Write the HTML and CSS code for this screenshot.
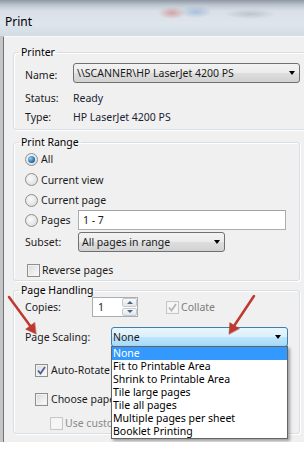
FILE: index.html
```html
<!DOCTYPE html>
<html lang="en">
<head>
    <meta charset="UTF-8">
    <meta name="viewport" content="width=device-width, initial-scale=1.0">
    <title>Print</title>
    <link rel="stylesheet" href="styles.css">
</head>
<body>

    <div class="titlebar"><span class="title">Print</span></div>

    <div class="frame">
        <div class="dialog">

            <fieldset class="group group-printer">
                <legend>Printer</legend>
                <div class="row row-name">
                    <span class="label label-name">Name:</span>
                    <div class="combo combo-printer"><span>\\SCANNER\HP LaserJet 4200 PS</span><i class="caret"></i></div>
                </div>
                <div class="row row-info first"><span class="label label-name">Status:</span><span class="value">Ready</span></div>
                <div class="row row-info"><span class="label label-name">Type:</span><span class="value">HP LaserJet 4200 PS</span></div>
            </fieldset>

            <fieldset class="group group-range">
                <legend>Print Range</legend>
                <div class="row option"><span class="radio on"></span>All</div>
                <div class="row option tall"><span class="radio"></span>Current view</div>
                <div class="row option"><span class="radio"></span>Current page</div>
                <div class="row row-pages">
                    <span class="label label-pages"><span class="radio"></span>Pages</span>
                    <div class="field pages-field">1 - 7</div>
                </div>
                <div class="row row-subset">
                    <span class="label label-subset">Subset:</span>
                    <div class="combo combo-subset"><span>All pages in range</span><i class="caret"></i></div>
                </div>
                <div class="row row-reverse"><span class="check"></span>Reverse pages</div>
            </fieldset>

            <fieldset class="group group-handling">
                <legend>Page Handling</legend>
                <div class="row row-copies">
                    <span class="label label-copies">Copies:</span>
                    <div class="spin">
                        <span class="spin-value">1</span>
                        <div class="spin-buttons">
                            <span class="spin-btn up"></span>
                            <span class="spin-btn down"></span>
                        </div>
                    </div>
                    <div class="collate">
                        <span class="check disabled">
                            <svg width="11" height="11" viewBox="0 0 11 11"><path d="M2 5.5 L4.5 8.5 L9 2" fill="none" stroke="#b4b4b4" stroke-width="1.8"/></svg>
                        </span>Collate
                    </div>
                </div>
                <div class="row row-scaling">
                    <span class="label label-scaling">Page Scaling:</span>
                    <div class="combo combo-scaling">
                        <span>None</span><i class="caret"></i>
                        <ul class="dropdown">
                            <li class="selected">None</li>
                            <li>Fit to Printable Area</li>
                            <li>Shrink to Printable Area</li>
                            <li>Tile large pages</li>
                            <li>Tile all pages</li>
                            <li>Multiple pages per sheet</li>
                            <li>Booklet Printing</li>
                        </ul>
                    </div>
                </div>
                <!-- the open list hides the rest of these labels -->
                <div class="row sub-option rotate" title="Auto-Rotate and Center">
                    <span class="check">
                        <svg width="11" height="11" viewBox="0 0 11 11"><path d="M2 5.5 L4.5 8.5 L9 2" fill="none" stroke="#4a5f9c" stroke-width="1.8"/></svg>
                    </span>Auto-Rotate
                </div>
                <div class="row sub-option paper" title="Choose paper source by PDF page size"><span class="check"></span>Choose pape</div>
                <div class="row sub-option custom" title="Use custom paper size when needed"><span class="check disabled"></span>Use custo</div>
            </fieldset>

        </div>
    </div>

    <!-- red arrows drawn over the screenshot -->
    <svg class="annotations" width="304" height="449" viewBox="0 0 304 449">
        <g fill="#bd3a31" stroke="#bd3a31" stroke-linecap="round">
            <line x1="9" y1="297" x2="31" y2="327" stroke-width="2.5"/>
            <polygon points="36,334 25.6,329.2 34.6,322.6" stroke-width="0.5"/>
            <line x1="254" y1="296" x2="234" y2="326" stroke-width="2.5"/>
            <polygon points="229,334 229.8,322.6 239.2,328.6" stroke-width="0.5"/>
        </g>
    </svg>

</body>
</html>
```

FILE: styles.css
```css
body {
    margin: 0;
    width: 304px;
    height: 449px;
    overflow: hidden;
    position: relative;
    background: #fff;
    font-family: "Noto Sans", sans-serif;
    font-size: 10.5px;
    color: #1b1b1b;
}
.titlebar {
    height: 36px;
    padding: 0 5px;
    box-sizing: border-box;
    display: flex;
    align-items: center;
    background:
        radial-gradient(ellipse 14px 6px at 172px 13px, rgba(200, 90, 80, 0.45), transparent),
        radial-gradient(ellipse 16px 6px at 196px 12px, rgba(80, 130, 200, 0.35), transparent),
        radial-gradient(ellipse 26px 5px at 250px 14px, rgba(120, 130, 140, 0.3), transparent),
        linear-gradient(#8f98a2 0, #bcc5cf 5px, #d9e0e7 11px, #dee5ec 24px, #d3dbe4 36px);
}
.title {
    font-size: 12px;
    color: #000;
    padding-top: 7px;
}
.frame {
    height: 406px;
    padding-left: 3px;
    background: linear-gradient(to right, #c4c6c8, #9c9fa2);
}
.dialog {
    height: 406px;
    box-sizing: border-box;
    border-left: 1px solid #6e7378;
    border-top: 1px solid #f7f9fb;
    background: #f0f0f0;
    padding-top: 8px;
    overflow: hidden;
}

/* group boxes */
.group {
    margin: 0 4px 0 9px;
    padding: 0 11px;
    border: 1px solid #d5dfe5;
    border-radius: 3px;
    box-shadow: inset 1px 1px 0 #fff, 1px 1px 0 #fff;
    min-width: 0;
}
.group legend {
    margin-left: -6px;
    padding: 0 2px;
    line-height: 14px;
    color: #000;
}
.group-printer {
    margin-right: -30px;
    padding-bottom: 3px;
}
.group-range {
    margin-top: 5px;
    padding-bottom: 0;
}
.group-handling {
    margin-top: 2px;
}

.row {
    display: flex;
    align-items: center;
    white-space: nowrap;
}
.label {
    flex: none;
    display: flex;
    align-items: center;
}
.row-name {
    height: 20px;
    margin-top: 4px;
}
.row-info {
    height: 19px;
}
.row-info.first {
    margin-top: 5px;
}
.label-name {
    width: 48px;
    padding-top: 3px;
}
.row-info .label-name {
    padding-top: 0;
}
.value {
    color: #1a2233;
}

/* combo boxes */
.combo {
    height: 20px;
    box-sizing: border-box;
    border: 1px solid #707070;
    border-radius: 3px;
    background: linear-gradient(#f3f3f3 0, #ebebeb 50%, #dedede 50%, #d2d2d2 100%);
    display: flex;
    align-items: center;
    justify-content: space-between;
    padding: 0 4px 0 3px;
    flex: none;
}
.caret {
    width: 0;
    height: 0;
    border-left: 3.5px solid transparent;
    border-right: 3.5px solid transparent;
    border-top: 4px solid #000;
}
.combo-printer {
    width: 227px;
}
.combo-subset {
    width: 147px;
}
.combo-scaling {
    width: 177px;
    position: relative;
    padding: 0 6px 0 1px;
    border-color: #3c7fb1;
    background: linear-gradient(#eaf6fd 0, #d9f0fc 50%, #bee6fd 50%, #a7d9f5 100%);
}
.dropdown {
    position: absolute;
    top: 18px;
    left: -1px;
    width: 177px;
    box-sizing: border-box;
    margin: 0;
    padding: 0;
    list-style: none;
    background: #fff;
    border: 1px solid #646464;
    box-shadow: 2px 2px 3px rgba(0, 0, 0, 0.35);
    z-index: 2;
}
.dropdown li {
    height: 13px;
    line-height: 13px;
    padding-left: 1px;
    color: #000;
}
.dropdown li.selected {
    background: #3399ff;
    color: #fff;
}

/* radios and checkboxes */
.radio {
    width: 13px;
    height: 13px;
    box-sizing: border-box;
    border-radius: 50%;
    border: 1px solid #8e8f8f;
    background: radial-gradient(circle at 40% 40%, #fbfbfb, #d6d6d6);
    margin-right: 3px;
    flex: none;
    display: flex;
    align-items: center;
    justify-content: center;
}
.radio.on::after {
    content: "";
    width: 7px;
    height: 7px;
    border-radius: 50%;
    background: radial-gradient(circle at 35% 35%, #8fd0f7, #1d64a0 70%);
}
.option {
    height: 20px;
}
.option.tall {
    height: 21px;
}
.row-pages {
    height: 20px;
}
.label-pages {
    width: 53px;
}
.field {
    height: 20px;
    box-sizing: border-box;
    border: 1px solid #abadb3;
    border-top-color: #9fa2a8;
    background: #fff;
    display: flex;
    align-items: center;
}
.pages-field {
    width: 208px;
    padding-left: 4px;
}
.row-subset {
    height: 20px;
    margin-top: 2px;
}
.label-subset {
    width: 53px;
}
.row-reverse {
    height: 20px;
    margin-top: 8px;
}
.row-reverse .check {
    margin: 0 2px 0 2px;
}
.check {
    width: 13px;
    height: 13px;
    box-sizing: border-box;
    border: 1px solid #8e8f8f;
    background: linear-gradient(135deg, #d9d9d9, #fdfdfd);
    box-shadow: inset 0 0 0 1px #f2f2f2;
    margin-right: 3px;
    flex: none;
    display: flex;
    align-items: center;
    justify-content: center;
}
.check.disabled {
    border-color: #c8c8c8;
    background: #f6f6f6;
}

/* page handling */
.row-copies {
    height: 20px;
}
.label-copies {
    width: 67px;
}
.spin {
    width: 46px;
    height: 20px;
    box-sizing: border-box;
    border: 1px solid #abadb3;
    background: #fff;
    display: flex;
    flex: none;
}
.spin-value {
    flex: 1;
    padding-left: 5px;
    line-height: 18px;
}
.spin-buttons {
    width: 15px;
    display: flex;
    flex-direction: column;
    gap: 1px;
    padding: 0 0 0 1px;
}
.spin-btn {
    flex: 1;
    border: 1px solid #c6cacf;
    border-radius: 2px;
    background: linear-gradient(#f7f8f9, #e3e6ea);
    display: flex;
    align-items: center;
    justify-content: center;
}
.spin-btn.up::after {
    content: "";
    border-left: 3px solid transparent;
    border-right: 3px solid transparent;
    border-bottom: 3px solid #4d6185;
}
.spin-btn.down::after {
    content: "";
    border-left: 3px solid transparent;
    border-right: 3px solid transparent;
    border-top: 3px solid #4d6185;
}
.collate {
    display: flex;
    align-items: center;
    margin-left: 28px;
    color: #7c7c7c;
}
.collate .check {
    margin-right: 2px;
}
.row-scaling {
    height: 20px;
    margin-top: 10px;
}
.label-scaling {
    width: 86px;
}
.sub-option {
    height: 20px;
}
.rotate {
    margin-top: 13px;
    padding-left: 10px;
}
.paper {
    margin-top: 9px;
    padding-left: 10px;
}
.custom {
    margin-top: 4px;
    padding-left: 25px;
    color: #8a8a8a;
}
.custom .check {
    margin-right: 2px;
}

.annotations {
    position: absolute;
    top: 0;
    left: 0;
    pointer-events: none;
}
```
